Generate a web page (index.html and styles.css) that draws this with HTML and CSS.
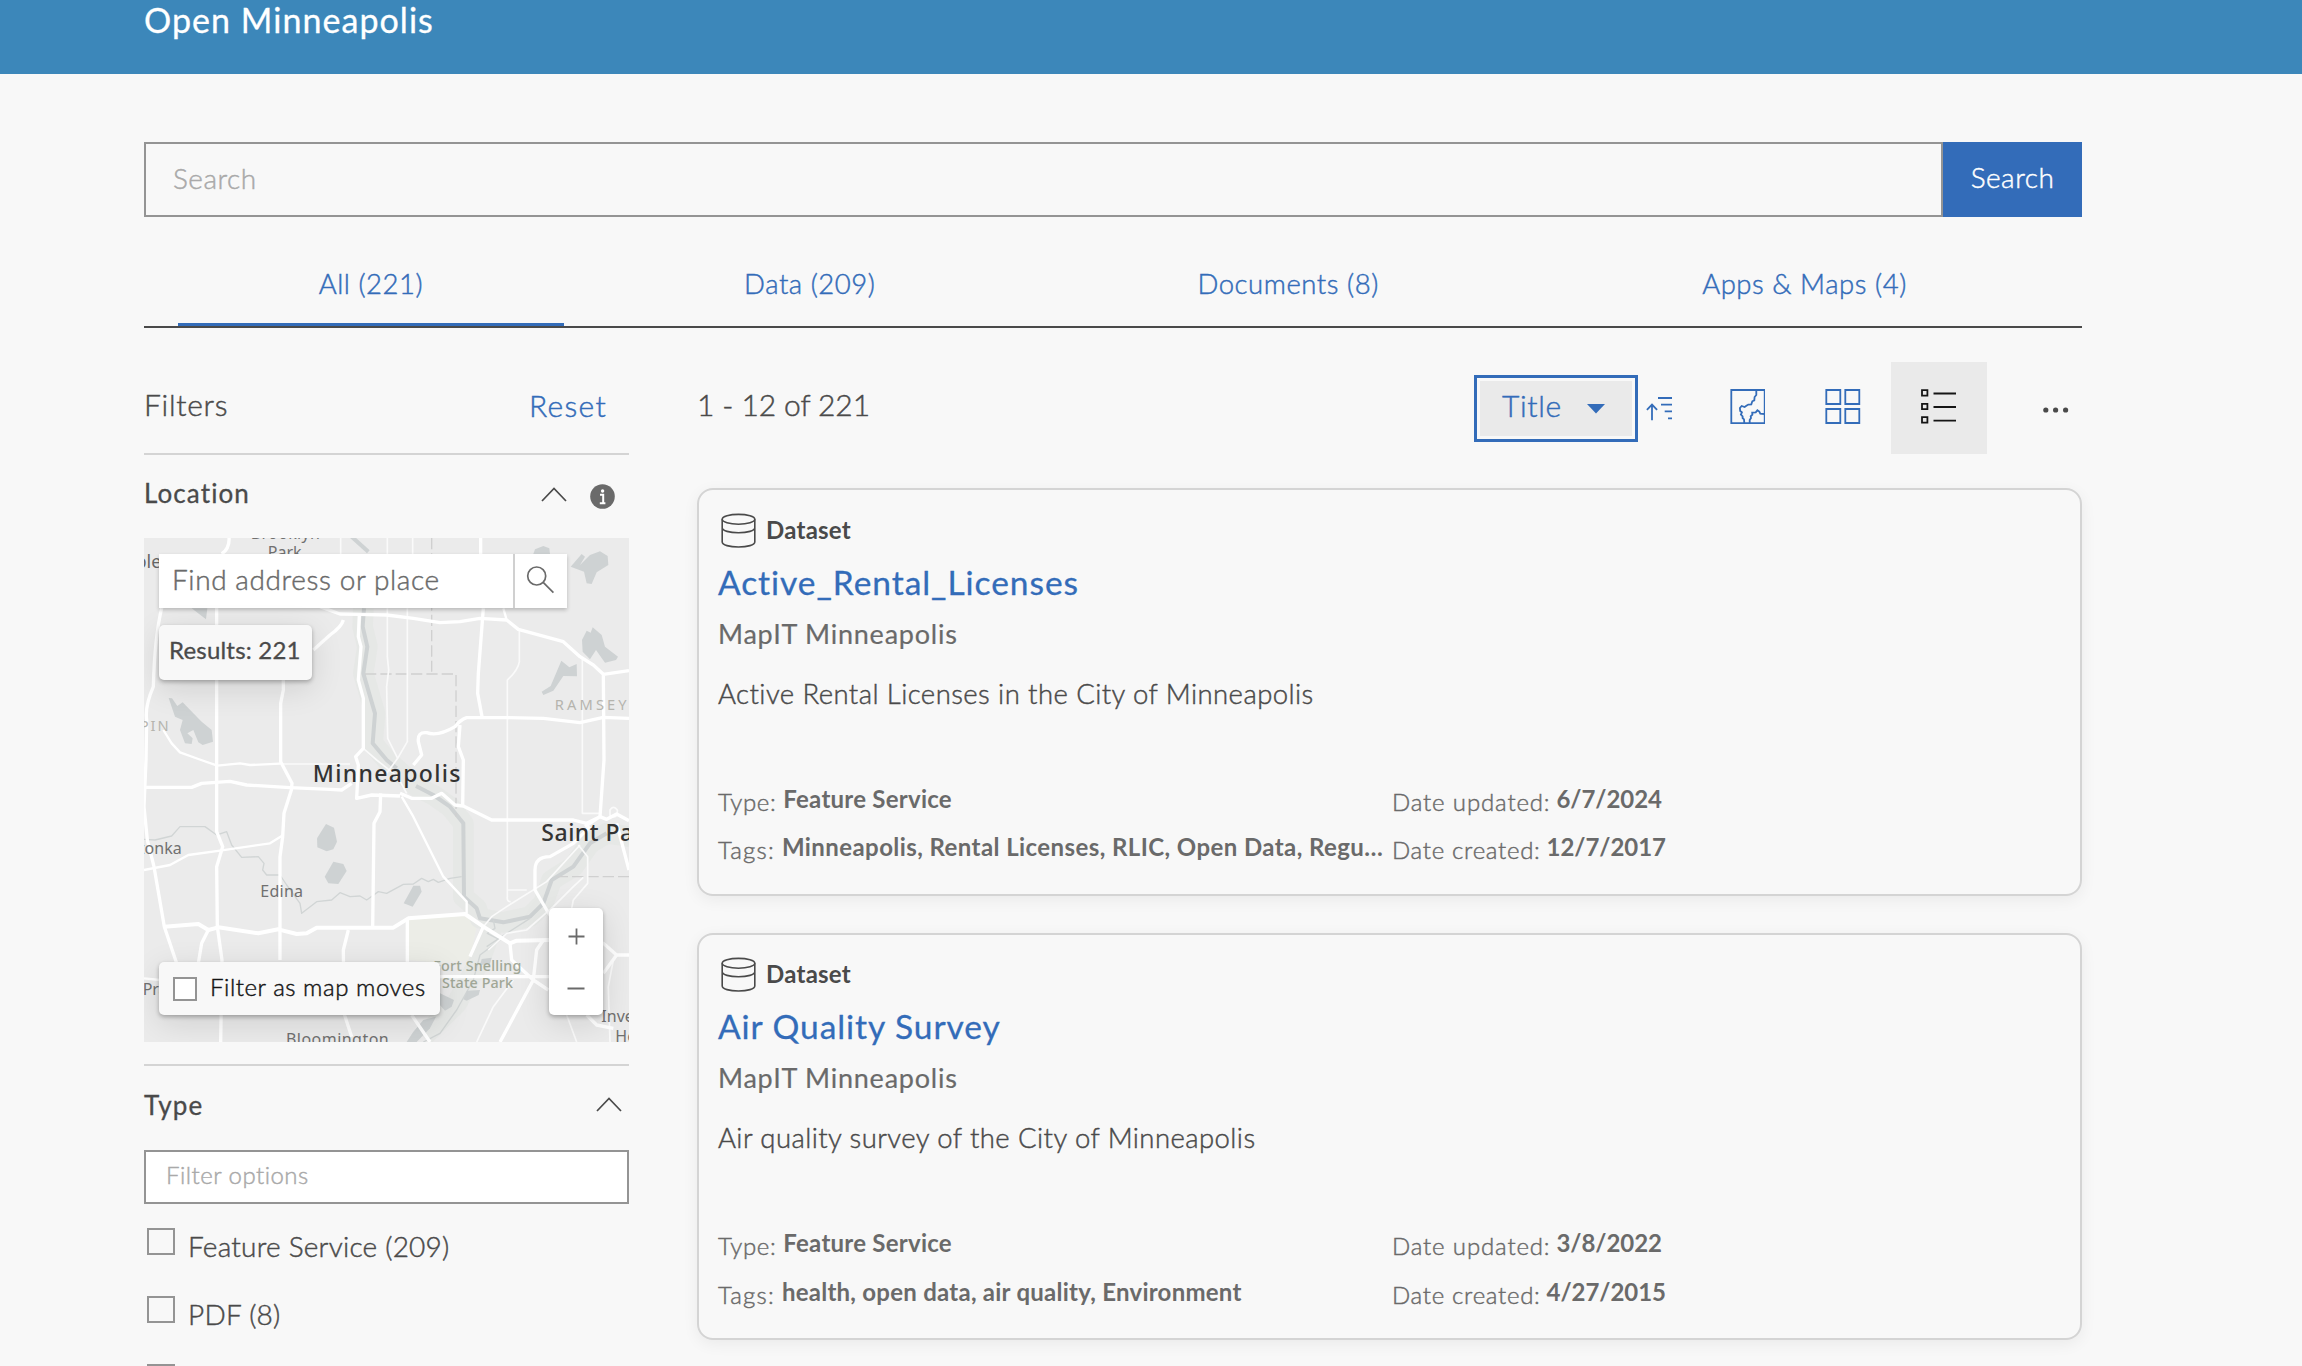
FILE: index.html
```html
<!DOCTYPE html>
<html lang="en">
<head>
<meta charset="utf-8">
<title>Open Minneapolis</title>
<link rel="stylesheet" href="styles.css">
</head>
<body>
<header class="site-header">Open Minneapolis</header>
<main class="page">
  <form class="search">
    <div class="search-input">Search</div>
    <div class="search-button">Search</div>
  </form>
  <nav class="tabs">
    <a class="tab tab-all active">All (221)</a>
    <a class="tab tab-data">Data (209)</a>
    <a class="tab tab-docs">Documents (8)</a>
    <a class="tab tab-apps">Apps &amp; Maps (4)</a>
  </nav>
  <div class="content">
    <aside class="sidebar">
      <div class="filters-head"><span class="filters-title">Filters</span><a class="reset">Reset</a></div>
      <div class="section-head">
        <span class="section-title">Location</span>
        <svg class="chevron" width="26" height="15" viewBox="0 0 26 15"><path d="M1 14 13 1.5 25 14"/></svg>
        <svg class="info" width="25" height="25" viewBox="0 0 25 25"><circle cx="12.5" cy="12.5" r="12.3"/><circle class="mark" cx="12.6" cy="7" r="1.7"/><path d="M10 10.8h3.2V19M9.8 19.2h5.6"/></svg>
      </div>
      <div class="map">
        <svg class="map-canvas" width="485" height="504" viewBox="42 294 1455 1512" preserveAspectRatio="none">
          <rect class="land" x="42" y="294" width="1455" height="1512"/>
          <path class="park" d="M835 1440 1000 1420 1040 1460 1020 1560 930 1570 835 1560Z"/>
          <g class="valley">
            <path d="M700 505 698 560 712 620 700 700 735 820 728 910 770 960 860 1040 910 1065 960 1100 1000 1150 1000 1370 1040 1405 1050 1435 1120 1447 1200 1430 1240 1390 1265 1320 1330 1280 1380 1210 1430 1180 1500 1190"/>
            <path d="M1090 1450 1050 1560 980 1690 880 1790"/>
          </g>
          <g class="river">
            <path d="M665 290 715 335"/>
            <path d="M702 505 698 560 712 620 700 700 735 820 728 910 770 960 800 985"/>
            <path d="M858 1038 910 1065 960 1100 1000 1150 1002 1370 1040 1405 1050 1435 1120 1447 1200 1430 1240 1390 1265 1320 1330 1280 1380 1210 1430 1180"/>
          </g>
          <g class="creek">
            <path d="M42 1198 75 1200 125 1188 150 1160 225 1160 260 1185 290 1175 305 1215 335 1252 385 1250 402 1270 398 1290 410 1305 450 1305 470 1335 510 1390 515 1420 560 1385 605 1380 630 1358 660 1370 690 1368 710 1380 745 1355 770 1360 820 1333 850 1332 875 1315 895 1325 910 1318 925 1327 960 1315 995 1310"/>
            <path d="M1090 1440 1095 1465 1072 1480 1110 1500 1050 1545 1030 1620 980 1710 930 1780 880 1806"/>
            <path d="M1200 1435 1130 1480 1070 1520"/>
          </g>
          <g class="lake">
            <path d="M116 774 126 775 142 798 158 787 190 820 215 845 245 870 249 905 218 915 205 907 190 870 172 880 188 895 185 912 165 910 150 870 158 840 135 830Z"/>
            <path d="M561 1195 588 1152 612 1163 621 1205 610 1228 590 1234 562 1222Z"/>
            <path d="M610 1265 640 1272 650 1293 625 1332 595 1330 584 1310Z"/>
            <path d="M850 1337 870 1337 875 1355 848 1400 821 1390Z"/>
            <path d="M1322 380 1355 342 1365 350 1350 375 1380 345 1410 334 1433 348 1435 375 1400 397 1385 432 1370 430 1362 395Z"/>
            <path d="M1356 600 1370 572 1382 578 1388 562 1415 585 1425 620 1464 650 1458 660 1425 668 1398 630 1380 658 1358 635Z"/>
            <path d="M1235 755 1262 738 1294 662 1318 682 1340 672 1341 709 1300 708 1270 752 1240 765Z"/>
            <path d="M1210 342 1215 328 1240 318 1258 325 1260 342Z"/>
            <path d="M185 505H232L228 538Z"/>
            <path d="M1000 1678 1012 1652 1050 1650 1046 1665 1010 1682Z"/>
            <path d="M930 1660 972 1680 965 1700 945 1712 925 1690Z"/>
            <path d="M830 1806 850 1775 880 1740 918 1730 900 1765 860 1806Z"/>
            <path d="M1055 1557 1085 1553 1080 1572 1050 1575Z"/>
          </g>
          <g class="county">
            <path d="M905 294V695"/><path d="M705 702H978V1130"/><path d="M1280 1310H1497"/>
          </g>
          <g class="thin">
            <path d="M632 294V345M772 294V345M848 294V345M1132 1350H1190"/>
            <path d="M772 505V650L776 690 770 740 773 895 803 955 832 905V505"/>
            <path d="M700 925 740 960 803 1010 830 1060M803 955 770 1000M450 972H660"/>
            <path d="M1168 570V665Q1165 690 1132 720V1370Q1130 1385 1142 1385"/>
            <path d="M1357 650V1120H1410"/>
            <path d="M1350 1215 1250 1325 1130 1400 1085 1430 1060 1460M1345 1215 1373 1250V1330L1330 1380 1325 1405"/>
            <path d="M1360 1312 1330 1340 1270 1400 1190 1470 1130 1480 1075 1530M1150 1620 1090 1700 1040 1806M1450 1560 1435 1640 1440 1806M1310 1725 1340 1806"/>
            <path d="M1440 1110q10-16 22 0v16q-15 10-22 0Z"/>
          </g>
          <g class="medium">
            <path d="M100 870 125 910 150 937 205 957 262 977 330 970 360 975 450 971"/>
            <path d="M42 1290 120 1275 175 1245 270 1232 420 1210 460 1185"/>
            <path d="M815 1070 850 1130 940 1310 1010 1385V1420M1120 505 1130 540M42 1615 90 1620"/>
          </g>
          <g class="major">
            <path d="M297 290Q300 325 275 342M96 500Q74 590 70 740 44 800 50 840L48 960 42 1100 52 1200 72 1280 103 1460 140 1570"/>
            <path d="M260 500V1175L278 1220 260 1280 262 1460 276 1560 272 1806"/>
            <path d="M460 720V750L452 790V965L486 1030 484 1050 462 1120 458 1190 450 1250V1560"/>
            <path d="M42 1042H185L215 1030 300 1024 350 1035 480 1043 600 1048 635 1050 665 1030"/>
            <path d="M570 500 630 522 690 523 770 525 850 535 930 548 990 545 1050 535 1130 540 1165 568 1300 605 1350 650 1390 675 1420 703 1497 692M1420 703 1422 960 1410 1130"/>
            <path d="M640 540Q635 560 600 585L550 630"/>
            <path d="M688 525 685 590 693 620 685 720 700 775V925L677 950 685 975 680 1075 725 1065 810 1068"/>
            <path d="M1052 294V345M1060 505 1045 700 1043 760 1056 830"/>
            <path d="M1497 835 1420 832 1350 848 1240 835 1130 833H1010Q990 840 975 860 925 890 890 878 862 875 865 905L875 945 850 975M990 855 985 920 1000 960 998 1098"/>
            <path d="M810 1060 845 1075 905 1075 935 1060 975 1095 1000 1098 1085 1140H1330L1370 1150 1410 1130 1430 1138 1460 1122 1497 1142M1460 1150 1497 1290M1410 1130 1365 1160"/>
            <path d="M1380 1160 1330 1210 1260 1250Q1215 1250 1215 1290V1350L1250 1410 1290 1470 1420 1510 1460 1545H1497M1460 1545 1420 1600"/>
            <path d="M752 1060 750 1115 732 1150 728 1465M235 1470 215 1510 205 1570M655 1470 640 1530 642 1720 665 1790M832 1435V1570"/>
            <path class="wide" d="M103 1460 205 1452 235 1470 265 1462 385 1480 445 1468 500 1482 530 1480 560 1463H790L835 1435 1005 1422 1060 1460 1140 1510 1160 1502 1260 1500"/>
            <path d="M845 1725 900 1806M1060 1460 1020 1550M1140 1510 1145 1560 1210 1620 1255 1650M1240 1500 1220 1530 1210 1620 1110 1806M930 1610H1260M1370 1725 1400 1755 1450 1765"/>
          </g>
          <g class="town">
            <text x="362" y="298" textLength="208">Brooklyn</text>
            <text x="413" y="354" textLength="102">Park</text>
            <text class="dark" x="94" y="384" text-anchor="end">Maple</text>
            <text x="155" y="1243" text-anchor="end">Minnetonka</text>
            <text x="391" y="1371" textLength="128">Edina</text>
            <text x="38" y="1666">Prairie</text>
            <text x="468" y="1814" textLength="308">Bloomington</text>
            <text x="1414" y="1745">Inver Grove</text>
            <text x="1456" y="1806">Heights</text>
          </g>
          <g class="region">
            <text x="122" y="874" text-anchor="end">HENNEPIN</text>
            <text x="1274" y="809" textLength="222">RAMSEY</text>
          </g>
          <g class="parkname">
            <text x="910" y="1593" textLength="264">Fort Snelling</text>
            <text x="936" y="1645" textLength="213">State Park</text>
          </g>
          <g class="city">
            <text x="548" y="1025" textLength="445">Minneapolis</text>
            <text x="1234" y="1202">Saint Paul</text>
          </g>
        </svg>
        <div class="map-search">
          <div class="map-search-input">Find address or place</div>
          <svg class="map-search-icon" width="52" height="54" viewBox="0 0 52 54"><circle cx="21.7" cy="22" r="9"/><path d="M28.2 28.4 38.4 38.6"/></svg>
        </div>
        <div class="map-results">Results: 221</div>
        <div class="map-filter"><i class="map-check"></i>Filter as map moves</div>
        <svg class="map-zoom" width="54" height="107" viewBox="0 0 54 107"><path d="M19.5 28.5h16M27.5 20.5v16M18.5 80.5h17"/></svg>
      </div>
      <div class="section-head type-head">
        <span class="section-title">Type</span>
        <svg class="chevron" width="26" height="15" viewBox="0 0 26 15"><path d="M1 14 13 1.5 25 14"/></svg>
      </div>
      <div class="option-filter">Filter options</div>
      <ul class="options">
        <li><i class="check"></i>Feature Service (209)</li>
        <li><i class="check"></i>PDF (8)</li>
        <li><i class="check"></i></li>
      </ul>
    </aside>
    <section class="results">
      <div class="toolbar">
        <span class="count">1 - 12 of 221</span>
        <div class="sort"><span class="sort-inner">Title<svg width="18" height="10" viewBox="0 0 18 10"><path d="M0 0H18L9 9.5Z"/></svg></span></div>
        <svg class="icon sort-dir" width="27" height="35" viewBox="0 0 27 35"><path d="M6 31.3V15.6M.9 20.9 6 15.6 11.1 20.9M12 9H26M15 15.7H26M18.7 22.4H26M22 29.4H26"/></svg>
        <div class="view"><svg class="icon" width="36" height="35" viewBox="-1 0 36 35"><path d="M1.3 1H34.7V34.2H1.3Z M26.3 1.3V6L24.6 8 24.3 11.3 22.3 12.3 21.3 15.3 18.3 15.6 16 17 14.6 18 11.7 17 9.9 19 10.2 22 11.9 23.3 10.9 25.6 12.6 27.3 12.6 29 14 30.3 14.3 34M19.7 34V31L21 29 20.7 27.3 22.4 25.6 22.2 23.6 25.7 23.3 27.4 21.3 29.3 22.6 30.3 24.6 34.5 25"/></svg></div>
        <div class="view"><svg class="icon" width="36" height="35" viewBox="0 0 36 35"><path d="M1.3 1H15.3V15H1.3ZM20.3 1H34.3V15H20.3ZM1.3 20H15.3V34H1.3ZM20.3 20H34.3V34H20.3Z"/></svg></div>
        <div class="view selected"><svg class="icon" width="36" height="35" viewBox="0 0 36 35"><path d="M1 1.2H6.4V6.6H1ZM1 14.8H6.4V20.2H1ZM1 28.2H6.4V33.6H1ZM12.5 4.5H35M12.5 18H35M12.5 31.7H35"/></svg></div>
        <svg class="more" width="53" height="10" viewBox="0 0 53 10"><circle cx="16.8" cy="5" r="2.6"/><circle cx="26.6" cy="5" r="2.6"/><circle cx="36.6" cy="5" r="2.6"/></svg>
      </div>
      <article class="card">
        <div class="kind"><svg width="38" height="36" viewBox="0 0 38 36"><ellipse cx="19.5" cy="6.3" rx="16.3" ry="4.9"/><path d="M3.2 6.3V29C3.2 32 10.5 34 19.5 34S35.8 32 35.8 29V6.3M3.2 14.8C3.2 17.8 10.5 19.7 19.5 19.7S35.8 17.8 35.8 14.8"/></svg><span>Dataset</span></div>
        <h2 class="title">Active_Rental_Licenses</h2>
        <div class="owner">MapIT Minneapolis</div>
        <p class="desc">Active Rental Licenses in the City of Minneapolis</p>
        <dl class="meta">
          <div class="pair"><dt class="type">Type:</dt><dd>Feature Service</dd></div>
          <div class="pair"><dt>Date updated:</dt><dd class="date">6/7/2024</dd></div>
          <div class="pair"><dt class="tags">Tags:</dt><dd class="tag-list">Minneapolis, Rental Licenses, RLIC, Open Data, Regu…</dd></div>
          <div class="pair"><dt class="created">Date created:</dt><dd class="date">12/7/2017</dd></div>
        </dl>
      </article>
      <article class="card second">
        <div class="kind"><svg width="38" height="36" viewBox="0 0 38 36"><ellipse cx="19.5" cy="6.3" rx="16.3" ry="4.9"/><path d="M3.2 6.3V29C3.2 32 10.5 34 19.5 34S35.8 32 35.8 29V6.3M3.2 14.8C3.2 17.8 10.5 19.7 19.5 19.7S35.8 17.8 35.8 14.8"/></svg><span>Dataset</span></div>
        <h2 class="title">Air Quality Survey</h2>
        <div class="owner">MapIT Minneapolis</div>
        <p class="desc">Air quality survey of the City of Minneapolis</p>
        <dl class="meta">
          <div class="pair"><dt class="type">Type:</dt><dd>Feature Service</dd></div>
          <div class="pair"><dt>Date updated:</dt><dd class="date">3/8/2022</dd></div>
          <div class="pair"><dt class="tags">Tags:</dt><dd>health, open data, air quality, Environment</dd></div>
          <div class="pair"><dt class="created">Date created:</dt><dd class="date">4/27/2015</dd></div>
        </dl>
      </article>
    </section>
  </div>
</main>
</body>
</html>
```

FILE: styles.css
```css
* { box-sizing: border-box; margin: 0; padding: 0; }

body {
  height: 1366px;
  overflow: hidden;
  background: #f8f8f8;
  color: #4a4a4a;
  font-family: Lato, "Open Sans", sans-serif;
  font-weight: 300;
  font-variant-ligatures: none;
  -webkit-text-stroke: 0.45px currentColor;
  white-space: nowrap;
}

svg { display: block; flex: none; }

.site-header {
  height: 74px;
  padding: 1px 0 0 144px;
  background: #3c87ba;
  color: #fff;
  font-size: 34px;
  line-height: 38px;
  font-weight: 400;
  letter-spacing: 1.05px;
  -webkit-text-stroke: 0.3px currentColor;
}

.page { width: 1938px; margin-left: 144px; padding-top: 68px; }

/* Search bar */
.search { display: flex; height: 75px; font-size: 28px; letter-spacing: 0.5px; }
.search-input {
  width: 1799px;
  padding-left: 27px;
  border: 2px solid #949494;
  color: #a9a9a9;
  line-height: 68px;
}
.search-button {
  width: 139px;
  background: #336cb9;
  color: #fff;
  line-height: 70px;
  text-align: center;
}

/* Tabs */
.tabs {
  display: flex;
  justify-content: space-between;
  height: 111px;
  padding: 0 33px 0 34px;
  border-bottom: 2px solid #4a4a4a;
}
.tab {
  padding-top: 52px;
  border-bottom: 3px solid transparent;
  color: #336cb9;
  font-size: 27.5px;
  line-height: 30px;
  letter-spacing: 0.55px;
  text-align: center;
}
.tab.active { border-color: #336cb9; }
.tab-all { width: 386px; }
.tab-data { width: 413px; }
.tab-docs { width: 465px; }
.tab-apps { width: 489px; }

.content { display: flex; gap: 68px; }
.sidebar { width: 485px; }
.results { width: 1385px; }

/* Sidebar */
.filters-head {
  display: flex;
  justify-content: space-between;
  height: 127px;
  padding: 58px 22px 0 0;
  border-bottom: 2px solid #d4d4d4;
  font-size: 30px;
  line-height: 36px;
  letter-spacing: 0.7px;
}
.reset { color: #336cb9; letter-spacing: 1.3px; margin-top: 1px; }

.section-head { display: flex; height: 83px; }
.section-title {
  flex: 1;
  padding-top: 22px;
  font-size: 26px;
  line-height: 32px;
  font-weight: 400;
  letter-spacing: 1.1px;
  -webkit-text-stroke: 0.3px currentColor;
}
.chevron { margin: 32px 23px 0 0; fill: none; stroke: #4a4a4a; stroke-width: 1.7; }
.info { margin: 29px 14px 0 0; fill: #6a6a6a; }
.info .mark { fill: #fff; }
.info path { fill: none; stroke: #fff; stroke-width: 2; }

.type-head { height: 86px; margin-top: 22px; border-top: 2px solid #d4d4d4; }
.type-head .section-title { padding-top: 23px; }
.type-head .chevron { margin: 31px 7px 0 0; }

.option-filter {
  height: 54px;
  padding-left: 20px;
  border: 2px solid #949494;
  background: #fff;
  color: #a9a9a9;
  font-size: 24px;
  line-height: 46px;
  letter-spacing: 0.47px;
}
.options { list-style: none; padding: 24px 0 0 3px; }
.options li {
  display: flex;
  gap: 13px;
  height: 68px;
  font-size: 28px;
  line-height: 36px;
  letter-spacing: 0.22px;
}
.check { width: 28px; height: 27px; border: 2px solid #949494; }

/* Map */
.map { position: relative; width: 485px; height: 504px; overflow: hidden; }
.land { fill: #ebebeb; }
.park { fill: #ecede7; }
.lake { fill: #ced2d3; }
.valley, .river, .creek, .county, .thin, .medium, .major { fill: none; stroke-linejoin: round; }
.valley { stroke: #e6e8e6; stroke-width: 62; }
.river { stroke: #ced2d3; stroke-width: 12; }
.creek { stroke: #d1d5d5; stroke-width: 4; }
.county { stroke: #d0d0d0; stroke-width: 4; stroke-dasharray: 34 12; }
.thin { stroke: #fafafa; stroke-width: 5; }
.medium { stroke: #fff; stroke-width: 7; }
.major { stroke: #fff; stroke-width: 10; }
.major .wide { stroke-width: 12; }
.map-canvas text { font-family: "Noto Sans", "Open Sans", sans-serif; font-weight: 400; stroke: none; -webkit-text-stroke: 0; }
.town text { fill: #707070; font-size: 48px; }
.town .dark { fill: #666; font-size: 54px; }
.region text { fill: #b5b4ae; font-size: 44px; letter-spacing: 6px; }
.parkname text { fill: #a0a797; font-size: 43px; font-weight: 500; }
.city text { fill: #333; font-size: 69px; font-weight: 500; letter-spacing: 1.5px; }

.map-search, .map-results, .map-filter, .map-zoom {
  position: absolute;
  box-shadow: 0 2px 4px rgba(0, 0, 0, 0.22);
}
.map-search { left: 15px; top: 16px; display: flex; width: 408px; height: 54px; background: #fff; }
.map-search-input {
  width: 356px;
  padding-left: 13px;
  border-right: 2px solid #d0d0d0;
  color: #6a6a6a;
  font-size: 28px;
  line-height: 50px;
  letter-spacing: 0.6px;
}
.map-search-icon { fill: none; stroke: #6a6a6a; stroke-width: 1.7; }
.map-results, .map-filter, .map-zoom { box-shadow: 0 2px 4px rgba(0, 0, 0, 0.28), 0 8px 32px rgba(0, 0, 0, 0.12); border-radius: 5px; }
.map-results {
  left: 15px; top: 87px;
  width: 153px; height: 55px;
  padding-left: 10px;
  background: #f8f8f8;
  font-size: 24px;
  line-height: 50px;
  font-weight: 400;
  letter-spacing: 0.2px;
  -webkit-text-stroke: 0.3px currentColor;
}
.map-filter {
  left: 15px; top: 424px;
  display: flex;
  gap: 13px;
  width: 281px; height: 53px;
  padding-left: 14px;
  background: #f8f8f8;
  color: #151515;
  font-size: 24px;
  line-height: 50px;
  letter-spacing: 0.55px;
}
.map-check { width: 24px; height: 24px; margin-top: 15px; border: 2px solid #949494; background: #fff; }
.map-zoom { left: 405px; top: 370px; background: #fff; fill: none; stroke: #6a6a6a; stroke-width: 1.8; }

/* Results toolbar */
.toolbar { display: flex; align-items: center; height: 160px; padding: 34px 0 34px; }
.count { flex: 1; margin-bottom: 8px; font-size: 30px; line-height: 36px; letter-spacing: -0.1px; }
.sort {
  width: 164px; height: 67px;
  padding: 3px;
  border: 3px solid #336cb9;
}
.sort-inner {
  display: flex;
  align-items: center;
  gap: 25px;
  height: 55px;
  padding: 0 0 6px 22px;
  background: #eaeaea;
  color: #336cb9;
  font-size: 30px;
  line-height: 36px;
  letter-spacing: 0.65px;
}
.sort-inner svg { fill: #336cb9; margin-top: 7px; }
.icon { margin-top: -3px; fill: none; stroke: #336cb9; stroke-width: 1.8; }
.sort-dir { margin: -3px 26px 0 8px; }
.view { display: flex; align-items: center; justify-content: center; width: 96px; height: 92px; }
.view.selected { background: #eaeaea; }
.selected .icon { stroke: #151515; }
.more { margin: 3px 0 0 42px; fill: #4a4a4a; }
.more { width: 53px; margin-left: 0; }
.view.selected { margin-right: 42px; }

/* Result cards */
.card {
  height: 408px;
  padding: 23px 20px 0 19px;
  border: 2px solid #d4d4d4;
  border-radius: 16px;
  box-shadow: 0 4px 16px rgba(0, 0, 0, 0.06);
}
.card.second { height: 407px; margin-top: 37px; padding-top: 22px; }
.kind {
  display: flex;
  gap: 9px;
  height: 36px;
  padding-top: 2px;
  font-size: 24px;
  line-height: 30px;
  font-weight: 700;
  letter-spacing: 0.25px;
  -webkit-text-stroke: 0;
}
.kind svg { margin: -2px 0 0 1px; fill: none; stroke: #4a4a4a; stroke-width: 1.6; }
.title {
  margin-top: 13px;
  color: #336cb9;
  font-size: 33.5px;
  line-height: 40px;
  font-weight: 400;
  letter-spacing: 0.95px;
  -webkit-text-stroke: 0.3px currentColor;
}
.owner {
  margin-top: 15px;
  color: #6a6a6a;
  font-size: 27px;
  line-height: 34px;
  font-weight: 400;
  letter-spacing: 0.77px;
  -webkit-text-stroke: 0.2px currentColor;
}
.desc { margin-top: 26px; font-size: 27.5px; line-height: 34px; letter-spacing: 0.43px; }
.meta {
  display: grid;
  grid-template-columns: 674px 1fr;
  grid-auto-rows: 48px;
  margin-top: 71px;
  color: #6a6a6a;
  font-size: 24px;
  line-height: 34px;
}
.second .meta { grid-auto-rows: 49px; }
.pair { display: flex; gap: 7px; }
.pair:nth-child(even) { gap: 6px; }
dt { padding-top: 3px; letter-spacing: 0.85px; }
dt.type { letter-spacing: 0.6px; }
dt.tags { letter-spacing: 1.2px; }
dt.created { letter-spacing: 0.7px; }
dd { font-weight: 700; letter-spacing: 0.25px; -webkit-text-stroke: 0; }
dd.tag-list { letter-spacing: 0.42px; }
dd.date { letter-spacing: -0.05px; }
```
